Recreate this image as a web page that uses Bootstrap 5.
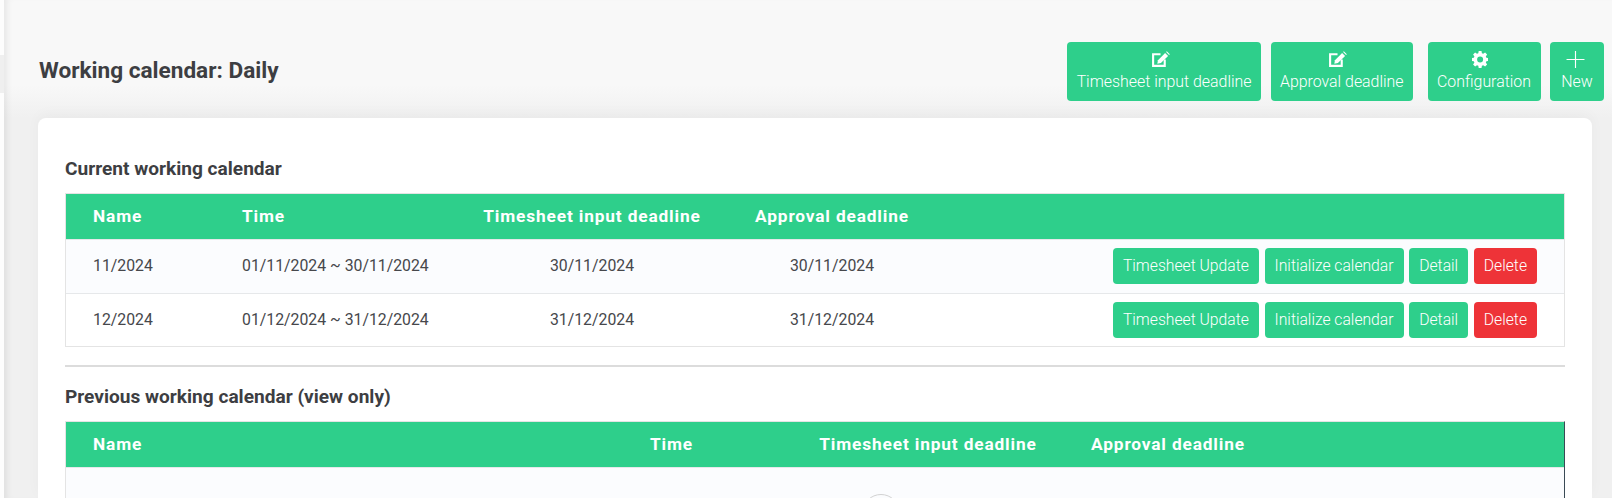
<!DOCTYPE html>
<html lang="en">
<head>
  <meta charset="UTF-8">
  <title>Working calendar</title>
  <link href="https://cdn.jsdelivr.net/npm/bootstrap@5.3.2/dist/css/bootstrap.min.css" rel="stylesheet">
  <style>
    :root{--green:#2ecf8b;--red:#ee3338;--ink:#3d3e42}
    html,body{height:498px;overflow:hidden}
    body{font-family:Roboto,"Liberation Sans",sans-serif;background:#f1f1f1;color:var(--ink);font-size:14px}
    /*---SHELL---*/
    #shell{display:flex;height:498px}
    #sideEdge{width:4px;flex:none;background:linear-gradient(#fdfdfd 55px,#efefef 55px,#efefef 93px,#fdfdfd 93px)}
    #page{flex:1;min-width:0;background:linear-gradient(#f8f8f8 0,#f8f8f8 85px,#f0f0f0 118px);box-shadow:inset 7px 0 6px -4px rgba(0,0,0,.07);padding:42px 8px 0 34px}
    /*---TOP---*/
    #topRow{height:59px;margin-bottom:17px}
    #pageTitle{font-size:22.6px;font-weight:700;margin:-2px 0 0 1px;color:var(--ink)}
    .act-btn{background:var(--green);border:0;color:#fff;border-radius:4px;height:59px;min-width:54px;padding:0 9.5px;font-size:15.9px;font-weight:300;line-height:20px;display:flex;flex-direction:column;align-items:center;justify-content:center}
    .act-btn svg{display:block;margin:-1px 8px 4px 0}
    .act-btn svg.plus-ico{margin-right:4px}
    .gap-near{margin-right:9.5px}
    .gap-far{margin-right:14.5px}
    /*---PANEL---*/
    #panel{background:#fff;border-radius:8px 8px 0 0;margin-right:12px;padding:39px 27px 0;height:380px;overflow:hidden;box-shadow:0 -4px 14px rgba(0,0,0,.03)}
    #panel h6{font-size:19.1px;font-weight:700;color:var(--ink);margin:0 0 12px;line-height:24px}
    .cal-tbl{width:100%;table-layout:fixed;border-collapse:collapse;margin:0}
    .cal-tbl th{background:var(--green);color:#fff;font-weight:700;font-size:17.3px;letter-spacing:.85px;height:45px;vertical-align:middle;padding:2px 0 0;white-space:nowrap}
    .cal-tbl td{background:#fff;height:53px;vertical-align:middle;padding:0;font-size:15.8px;color:#46474b;border-top:1px solid #e6e8ea;white-space:nowrap}
    .cal-tbl tbody tr:nth-child(odd) td{background:#fbfcfe;height:54px}
    .tbl-wrap{border:1px solid #e4e4e4}
    .row-btn{background:var(--green);border:0;color:#fff;border-radius:4px;height:36px;padding:0 10px;font-size:15.7px;font-weight:300}
    .row-btn.del{background:var(--red)}
    .row-acts{display:flex;justify-content:flex-end;gap:5.7px;padding-right:27px}
    #midRule{border:0;border-top:2px solid #dcdcdc;opacity:1;margin:18px 0}
    #loader{width:38px;height:38px;border-radius:50%;border:1px solid #d2d2d2;margin:26px 0 0 796px;display:block}
    #prevWrap{border-right:1px solid #3a4a55}
  </style>
</head>
<body>
<div id="shell">
  <div id="sideEdge"></div>
  <div id="page">
    <div id="topRow" class="d-flex align-items-center">
      <h1 id="pageTitle" class="me-auto">Working calendar: Daily</h1>
      <div class="d-flex">
        <button class="act-btn gap-near">
          <svg width="19" height="17" viewBox="0 0 18 16"><path fill="none" stroke="#fff" stroke-width="2" d="M9 3H2v11h11V8"/><path fill="#fff" d="M6 12l.6-3.400L13.400 1.800l2.800 2.800L9.400 11.400z"/><path fill="#fff" d="M14.300.900l.7-.7 2.800 2.800-.7.700z"/></svg>
          Timesheet input deadline
        </button>
        <button class="act-btn gap-far">
          <svg width="19" height="17" viewBox="0 0 18 16"><path fill="none" stroke="#fff" stroke-width="2" d="M9 3H2v11h11V8"/><path fill="#fff" d="M6 12l.6-3.400L13.400 1.800l2.800 2.800L9.400 11.400z"/><path fill="#fff" d="M14.300.900l.7-.7 2.800 2.800-.7.700z"/></svg>
          Approval deadline
        </button>
        <button class="act-btn gap-near">
          <svg width="16" height="17" viewBox="0 0 16 16"><path fill="#fff" fill-rule="evenodd" d="M6.600 0h2.800l.4 2.200 1.300.6L13 1.500l2 2-1.300 1.900.6 1.300 2.200.4v2.800l-2.200.4-.6 1.300 1.300 1.900-2 2-1.900-1.300-1.300.6-.4 2.200H6.600l-.4-2.200-1.300-.6L3 15.500l-2-2 1.300-1.900-.6-1.300L-.5 9.900V7.100l2.200-.4.600-1.300L1 3.500l2-2 1.900 1.300 1.300-.6zM8 5.500a3 3 0 1 0 0 6 3 3 0 0 0 0-6z" transform="translate(.1 -.5)"/></svg>
          Configuration
        </button>
        <button class="act-btn">
          <svg class="plus-ico" width="19" height="17" viewBox="0 0 19 18"><path stroke="#fff" stroke-width="1.200" d="M9.500 0v18M0 9h19"/></svg>
          New
        </button>
      </div>
    </div>

    <div id="panel">
      <h6>Current working calendar</h6>
      <div class="tbl-wrap">
        <table class="cal-tbl" id="curTbl">
          <colgroup><col style="width:27px"><col style="width:149px"><col style="width:230px"><col style="width:240px"><col style="width:240px"><col></colgroup>
          <thead><tr><th></th><th>Name</th><th>Time</th><th class="text-center">Timesheet input deadline</th><th class="text-center">Approval deadline</th><th></th></tr></thead>
          <tbody>
            <tr><td></td><td>11/2024</td><td>01/11/2024 ~ 30/11/2024</td><td class="text-center">30/11/2024</td><td class="text-center">30/11/2024</td>
              <td><div class="row-acts"><button class="row-btn">Timesheet Update</button><button class="row-btn">Initialize calendar</button><button class="row-btn">Detail</button><button class="row-btn del">Delete</button></div></td></tr>
            <tr><td></td><td>12/2024</td><td>01/12/2024 ~ 31/12/2024</td><td class="text-center">31/12/2024</td><td class="text-center">31/12/2024</td>
              <td><div class="row-acts"><button class="row-btn">Timesheet Update</button><button class="row-btn">Initialize calendar</button><button class="row-btn">Detail</button><button class="row-btn del">Delete</button></div></td></tr>
          </tbody>
        </table>
      </div>
      <hr id="midRule">
      <h6>Previous working calendar (view only)</h6>
      <div class="tbl-wrap" id="prevWrap">
        <table class="cal-tbl">
          <colgroup><col style="width:27px"><col style="width:442px"><col style="width:273px"><col style="width:240px"><col style="width:240px"><col></colgroup>
          <thead><tr><th></th><th>Name</th><th class="text-center">Time</th><th class="text-center">Timesheet input deadline</th><th class="text-center">Approval deadline</th><th></th></tr></thead>
          <tbody><tr><td colspan="6"><span id="loader"></span></td></tr></tbody>
        </table>
      </div>
    </div>
  </div>
</div>
</body>
</html>
